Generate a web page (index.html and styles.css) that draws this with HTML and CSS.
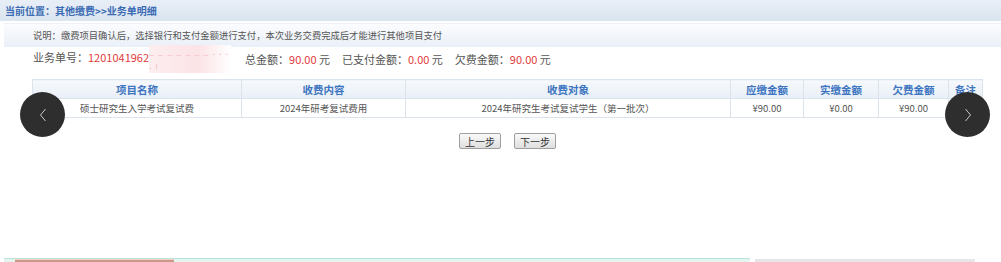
FILE: index.html
```html
<!DOCTYPE html>
<html lang="zh-CN">
<head>
    <meta charset="UTF-8">
    <title>业务单明细</title>
    <link rel="stylesheet" href="styles.css">
</head>
<body>
    <div class="crumb">当前位置：其他缴费&gt;&gt;业务单明细</div>

    <div class="note">说明：缴费项目确认后，选择银行和支付金额进行支付，本次业务交费完成后才能进行其他项目支付</div>

    <div class="info">
        <span>业务单号：<span class="red">1201041962</span><span class="mask">_ _ _ _ _ _ _ . . . . ı</span></span>
        <span>总金额：<span class="red">90.00</span> 元</span>
        <span>已支付金额：<span class="red">0.00</span> 元</span>
        <span>欠费金额：<span class="red">90.00</span> 元</span>
    </div>

    <div class="box">
        <table class="detail">
            <tr>
                <th class="c1">项目名称</th>
                <th class="c2">收费内容</th>
                <th class="c3">收费对象</th>
                <th class="c4">应缴金额</th>
                <th class="c5">实缴金额</th>
                <th class="c6">欠费金额</th>
                <th class="c7">备注</th>
            </tr>
            <tr>
                <td>硕士研究生入学考试复试费</td>
                <td>2024年研考复试费用</td>
                <td>2024年研究生考试复试学生（第一批次）</td>
                <td>¥90.00</td>
                <td>¥0.00</td>
                <td>¥90.00</td>
                <td></td>
            </tr>
        </table>

        <div class="actions">
            <button class="btn">上一步</button>
            <button class="btn">下一步</button>
        </div>
    </div>

    <div class="bottom">
        <div class="panel"><div class="tab"></div></div>
        <div class="side"></div>
    </div>

    <button class="nav prev">
        <svg width="14" height="18" viewBox="0 0 14 18"><path d="M9.5 3 L4.5 9 L9.5 15" fill="none" stroke="#c8c8c8" stroke-width="1"/></svg>
    </button>
    <button class="nav next">
        <svg width="14" height="18" viewBox="0 0 14 18"><path d="M4.5 3 L9.5 9 L4.5 15" fill="none" stroke="#c8c8c8" stroke-width="1"/></svg>
    </button>
</body>
</html>
```

FILE: styles.css
```css
body {
    margin: 0;
    height: 262px;
    overflow: hidden;
    display: flex;
    flex-direction: column;
    font-family: "Noto Sans CJK SC", "Microsoft YaHei", sans-serif;
    font-size: 10px;
    color: #555;
    background: #fff;
    position: relative;
}
.crumb {
    height: 21px;
    line-height: 21px;
    padding-left: 5px;
    background: linear-gradient(#e9eff7, #dae4ef);
    color: #3b6cb3;
    font-weight: bold;
}
.note {
    margin: 2px 0 0 4px;
    height: 23px;
    line-height: 23px;
    padding-left: 29px;
    background: linear-gradient(#fbfcfe, #eaf0f8);
    border-top: 1px solid #eef2f8;
    font-size: 9.3px;
    color: #555;
}
.info {
    display: flex;
    align-items: center;
    gap: 12px;
    padding-left: 33px;
    height: 24px;
    line-height: 24px;
    font-size: 11px;
    color: #555;
}
.red {
    color: #df3b3b;
}
.mask {
    display: inline-block;
    vertical-align: middle;
    width: 82px;
    margin-right: 2px;
    color: #f3b7bc;
    font-size: 9px;
    letter-spacing: 1px;
    background: linear-gradient(90deg, #fdeef0, #fbe3e6 60%, #fff);
    line-height: 14px;
}
.box {
    margin: 8px 0 0 32px;
    width: 951px;
}
.detail {
    width: 951px;
    border-collapse: collapse;
    table-layout: fixed;
}
.detail th,
.detail td {
    height: 18px;
    padding: 0;
    border: 1px solid #dbe3ec;
    text-align: center;
    white-space: nowrap;
    overflow: hidden;
}
.detail th {
    background: linear-gradient(#f6f9fc, #e8eff7);
    color: #3d74c0;
    font-weight: bold;
    font-size: 10.5px;
}
.detail td {
    color: #555;
    font-size: 9.5px;
}
.c1 { width: 208px; }
.c2 { width: 163px; }
.c3 { width: 324px; }
.c4 { width: 72px; }
.c5 { width: 74px; }
.c6 { width: 69px; }
.actions {
    display: flex;
    justify-content: center;
    gap: 13px;
    margin-top: 15px;
}
.btn {
    height: 16px;
    width: 42px;
    padding: 0;
    font-family: inherit;
    font-size: 10px;
    color: #333;
    background: linear-gradient(#fafafa, #dedede);
    border: 1px solid #9f9f9f;
    border-radius: 2px;
}
.bottom {
    margin-top: auto;
    display: flex;
    align-items: flex-start;
    height: 4px;
}
.panel {
    margin-left: 4px;
    width: 746px;
    height: 3px;
    border-top: 1px solid #b9e3d6;
    background: #e4f5ef;
}
.tab {
    margin-left: 11px;
    width: 159px;
    height: 2px;
    background: #c99a8b;
    border-top: 1px solid #f3d3c6;
}
.side {
    margin: 1px 0 0 5px;
    width: 220px;
    height: 3px;
    background: #e6e6e6;
}
.nav {
    position: absolute;
    top: 92px;
    width: 45px;
    height: 45px;
    padding: 0;
    border: none;
    border-radius: 50%;
    background: #2e2e2e;
    display: flex;
    align-items: center;
    justify-content: center;
}
.prev {
    left: 20px;
}
.next {
    left: 945px;
}
```
